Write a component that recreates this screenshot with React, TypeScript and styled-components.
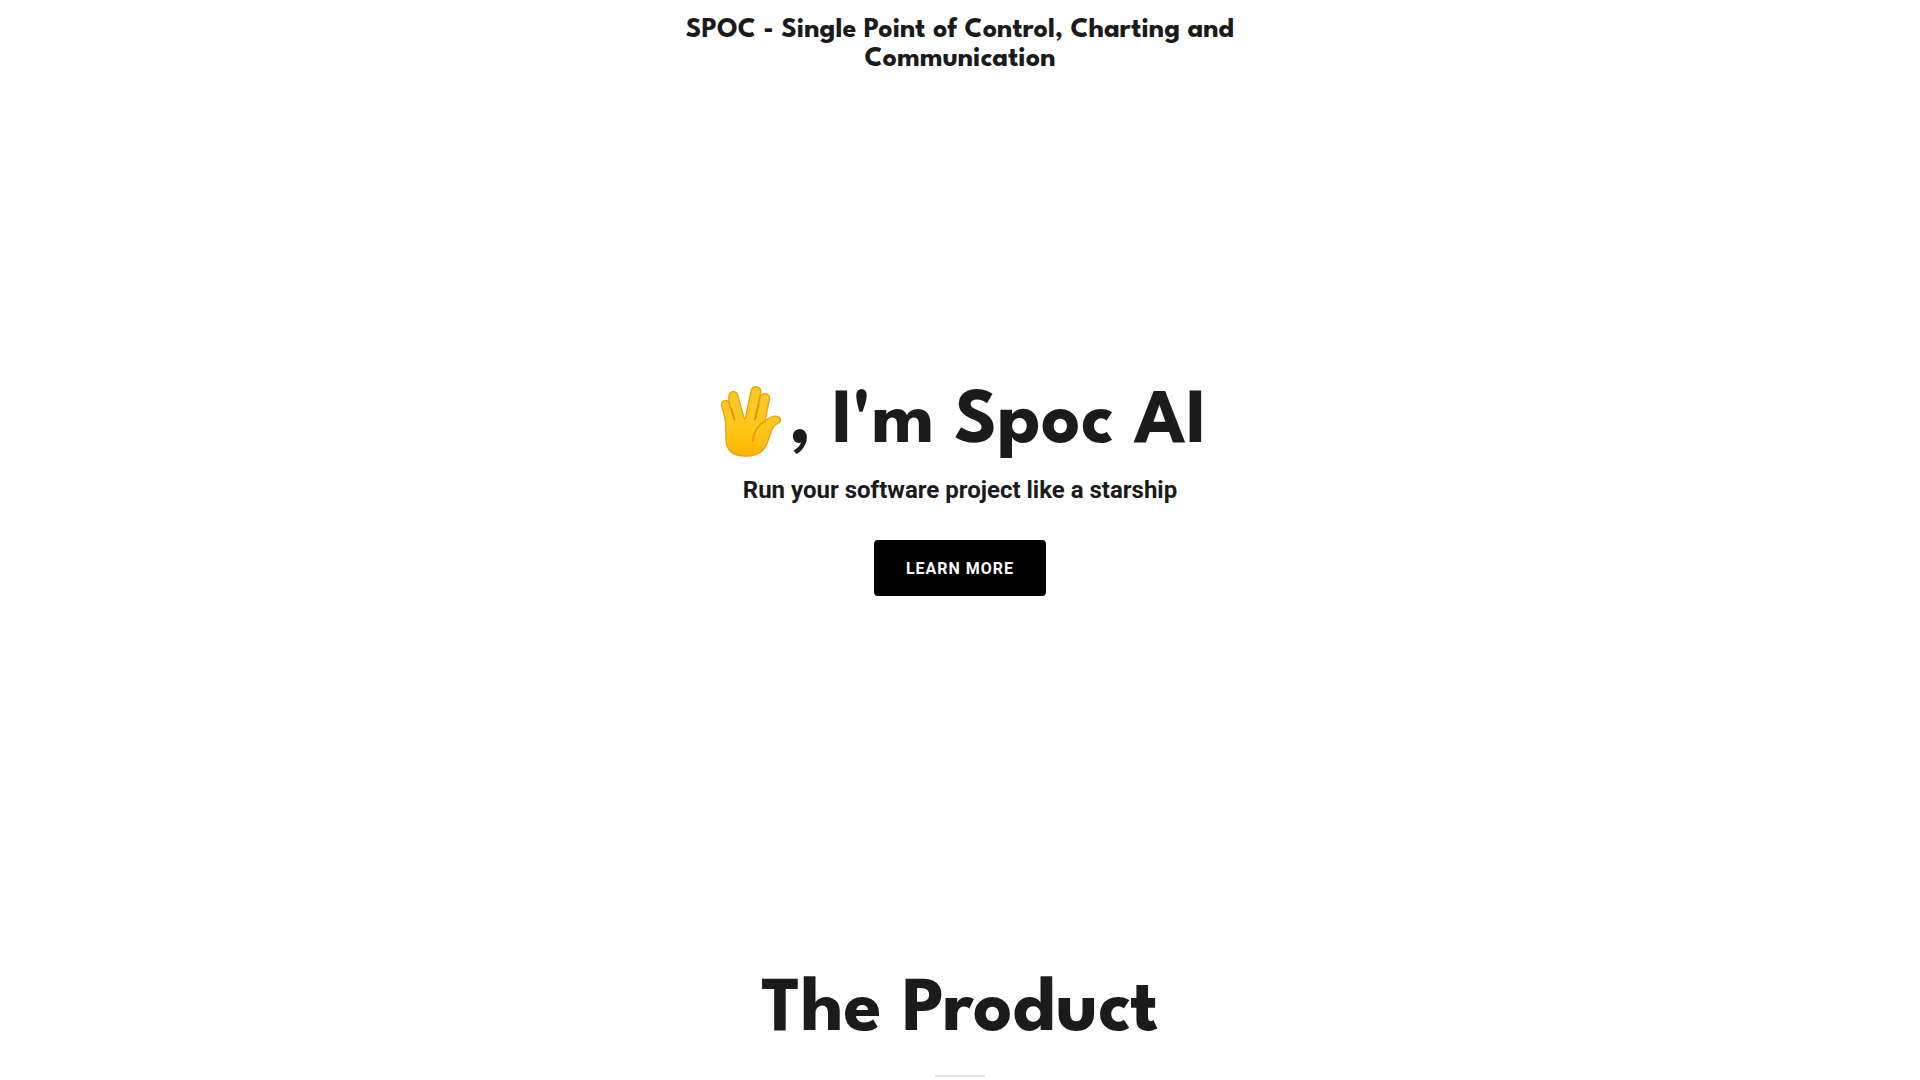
import React from "react";
import styled, { createGlobalStyle } from "styled-components";

const ink = "#1b1b1b";
const displayFont = `"League Spartan", Lato, "Open Sans", sans-serif`;

const GlobalStyle = createGlobalStyle`
  body {
    margin: 0;
    background: #fff;
    color: ${ink};
    font-family: Roboto, "Liberation Sans", sans-serif;
  }
`;

const Header = styled.header`
  display: flex;
  justify-content: center;
  padding: 16px 24px 8px;
`;

const SiteName = styled.p`
  max-width: 608px;
  margin: 0;
  font-family: ${displayFont};
  font-size: 28px;
  font-weight: 700;
  line-height: 29px;
  text-align: center;
`;

const Hero = styled.section`
  display: flex;
  flex-direction: column;
  align-items: center;
  padding: 298px 24px 292px;
`;

const Title = styled.h1`
  display: flex;
  align-items: center;
  gap: 8px;
  margin: 0;
  font-family: ${displayFont};
  font-size: 77px;
  font-weight: 700;
  line-height: 88px;
`;

const SaluteIcon = styled.svg`
  flex: none;
  width: 60px;
  height: 71px;
  margin: 0 0 6px 8px;
`;

const Tagline = styled.p`
  margin: 2px 0 30px;
  font-size: 24px;
  font-weight: 700;
  line-height: 40px;
  text-align: center;
`;

const Cta = styled.button`
  height: 56px;
  padding: 0 32px;
  border: 0;
  border-radius: 4px;
  background: #000;
  color: #fff;
  font-family: inherit;
  font-size: 16px;
  font-weight: 700;
  letter-spacing: 1px;
  text-transform: uppercase;
  cursor: pointer;
`;

const Product = styled.section`
  display: flex;
  flex-direction: column;
  align-items: center;
  padding: 80px 24px 0;
`;

const SectionTitle = styled.h2`
  margin: 0;
  font-family: ${displayFont};
  font-size: 77px;
  font-weight: 700;
  line-height: 88px;
  text-align: center;
`;

const Divider = styled.hr`
  width: 50px;
  height: 2px;
  margin: 19px 0 0;
  border: 0;
  background: #e2e2e2;
`;

function Salute() {
  return (
    <SaluteIcon viewBox="0 0 180 212" role="img" aria-label="Vulcan salute">
      <defs>
        <linearGradient id="skin" x1="0" y1="0" x2="0" y2="1">
          <stop offset="0" stopColor="#fdc82f" />
          <stop offset="0.6" stopColor="#ffc81a" />
          <stop offset="1" stopColor="#ffb300" />
        </linearGradient>
      </defs>
      <path
        d="M14 110 C13 92 5 74 2 60 C-1 41 21 37 25 53 L28 64 C25 49 22 38 24 29 C26 13 45 12 50 26 L68 92 C70 100 72 100 74 93 L90 15 C94-4 121-2 119 18 L117 33 C121 18 149 18 145 40 L132 103 L151 93 C160 87 178 91 179 101 C180 111 165 112 158 121 C149 132 146 151 139 169 C130 197 107 210 74 210 C37 210 16 193 15 160 Z"
        fill="url(#skin)"
        stroke="#eba00c"
        strokeWidth="4"
        strokeLinejoin="round"
      />
      <path
        d="M28 62 L41 102 M117 33 L101 101 M132 105 C112 116 98 133 95 165"
        fill="none"
        stroke="#e59c0b"
        strokeWidth="5"
        strokeLinecap="round"
      />
      <path
        d="M32 70 L40 98 M113 56 L103 97"
        fill="none"
        stroke="#d99310"
        strokeWidth="5"
        strokeLinecap="round"
      />
    </SaluteIcon>
  );
}

export default function App() {
  return (
    <>
      <GlobalStyle />
      <Header>
        <SiteName>SPOC - Single Point of Control, Charting and Communication</SiteName>
      </Header>
      <main>
        <Hero>
          <Title>
            <Salute />
            <span>, I'm Spoc AI</span>
          </Title>
          <Tagline>Run your software project like a starship</Tagline>
          <Cta type="button">Learn more</Cta>
        </Hero>
        <Product>
          <SectionTitle>The Product</SectionTitle>
          <Divider />
        </Product>
      </main>
    </>
  );
}
